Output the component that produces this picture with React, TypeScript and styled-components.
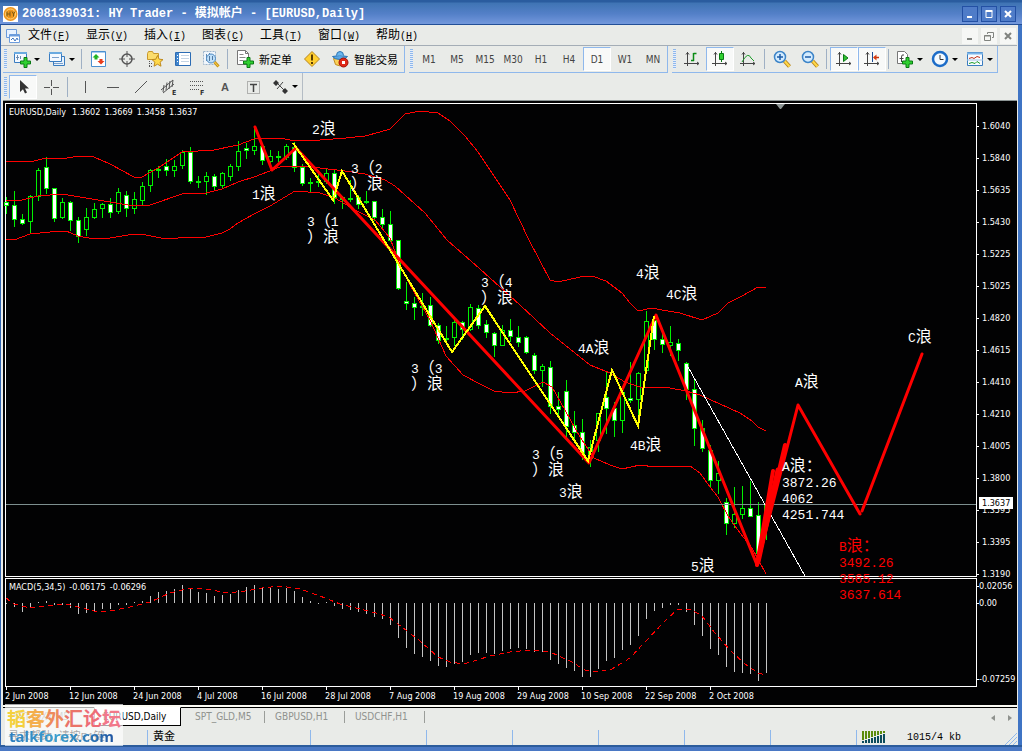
import React from "react";
import styled, { createGlobalStyle, css } from "styled-components";

const SANS = `"DejaVu Sans Condensed", "Noto Sans", "Noto Sans CJK SC", sans-serif`;
const MONO = `"Liberation Mono", "Noto Sans CJK SC", monospace`;
const FACE = "#e9ebe8";
const EDGE = "#8fb8ec";

const GlobalStyle = createGlobalStyle`
  *, *::before, *::after { box-sizing: border-box; }
  body { margin: 0; background: #3f6db4; }
  button { font: inherit; color: inherit; background: none; border: 0; padding: 0; margin: 0; }
  ul { list-style: none; margin: 0; padding: 0; }
`;

/* ---------- window frame ---------- */

const Window = styled.div`
  display: flex;
  flex-direction: column;
  min-height: 100vh;
  font-family: ${SANS};
  font-size: 10px;
  color: #111;
`;

const TitleBar = styled.header`
  display: flex;
  align-items: center;
  height: 25px;
  padding: 3px 6px 0 3px;
  border-bottom: 1px solid #234f97;
  background: linear-gradient(#2a5c9f 0, #2a5c9f 2px, #3f74b4 3px, #5480c8 14px, #7398dc 24px);
`;

const Title = styled.h1`
  flex: 1;
  margin: 0 0 0 4px;
  font: bold 12px/16px ${MONO};
  color: #fff;
  white-space: pre;
`;

const CaptionButtons = styled.div`
  display: flex;
  gap: 3px;
`;

const CaptionButton = styled.button<{ $flat?: boolean }>`
  display: grid;
  place-items: center;
  width: 16px;
  height: 16px;
  border: 1px solid ${(p) => (p.$flat ? "#f6f7f5" : "#2350a4")};
  background: ${(p) => (p.$flat ? "#f6f7f5" : "#4f7cc8")};
  color: ${(p) => (p.$flat ? "#80837f" : "#fff")};
`;

const Body = styled.div`
  display: flex;
  flex-direction: column;
  flex: 1;
  padding-right: 1px;
  border-left: 1px solid #2f64b0;
  border-right: 4px solid #3f74c4;
  background: ${FACE};
`;

const MenuBar = styled.nav`
  display: flex;
  align-items: center;
  height: 21px;
  padding: 2px 1px 0 5px;
  border-bottom: 1px solid #a4adb6;
`;

const MenuItems = styled.div`
  display: flex;
  flex: 1;
  margin-left: 7px;
`;

const MenuButton = styled.button`
  width: 58px;
  text-align: left;
  font: 12px/18px ${MONO};
  white-space: nowrap;
  color: #000;
`;

const Hotkey = styled.span`
  font-size: 10px;
`;

/* ---------- toolbars ---------- */

const ToolRow = styled.div`
  display: flex;
  gap: 4px;
  height: 27px;
  padding-left: 2px;
`;

const ToolGroup = styled.div<{ $plain?: boolean }>`
  display: flex;
  align-items: center;
  border-right: 1px solid ${(p) => (p.$plain ? "#b4bcc4" : EDGE)};
  border-bottom: ${(p) => (p.$plain ? "0" : `1px solid ${EDGE}`)};
`;

const Grip = styled.span`
  width: 3px;
  height: 20px;
  margin: 0 2px 0 1px;
  background: repeating-linear-gradient(#8fb8ec 0 1px, #e6eefa 1px 2px);
`;

const Divider = styled.span`
  width: 1px;
  height: 20px;
  margin: 0 3px 0 2px;
  background: #9fb0c4;
`;

const ToolButton = styled.button<{ $wide?: boolean; $active?: boolean; $text?: boolean }>`
  display: flex;
  align-items: center;
  justify-content: center;
  gap: 3px;
  width: ${(p) => (p.$wide ? "35px" : "28px")};
  padding: 0 1px;
  height: 24px;
  font-size: 10px;
  color: #444;
  ${(p) =>
    p.$text &&
    css`
      width: auto;
      gap: 5px;
      padding: 0 6px 0 5px;
      font-size: 11px;
      color: #000;
    `}
  ${(p) =>
    p.$active &&
    css`
      border: 1px solid #fff;
      border-top-color: ${EDGE};
      border-left-color: ${EDGE};
      background: #f8f9f8;
    `}
`;

const Caret = styled.span`
  border: 3px solid transparent;
  border-top: 3px solid #000;
  border-bottom: 0;
`;

const Ico = ({ children, w = 18 }: { children: React.ReactNode; w?: number }) => (
  <svg width={w} height={18} viewBox={`0 0 ${w} 18`} fill="none" aria-hidden="true">
    {children}
  </svg>
);

const Plus = ({ x, y }: { x: number; y: number }) => (
  <path
    transform={`translate(${x} ${y})`}
    d="M4 .5h3V4h3.500v3H7v3.500H4V7H.5V4H4z"
    fill="#2fd02f"
    stroke="#0a7a14"
  />
);

const NewChart = () => (
  <Ico>
    <path d="M1.500 2.500h12v10h-12z" fill="#f4f9ff" stroke="#3a7cc0" />
    <path d="M1 3h13" stroke="#6aaae0" strokeWidth="2" />
    <path d="M4.500 5v5M3 7.500h3M7.500 6v3" stroke="#6c8cb0" />
    <Plus x={7} y={7} />
  </Ico>
);
const Profiles = () => (
  <Ico>
    <path d="M5.500 6.500h11v9h-11z" fill="#e8f2fc" stroke="#3a7cc0" />
    <path d="M1.500 2.500h12v9h-12z" fill="#f4f9ff" stroke="#3a7cc0" />
    <path d="M1 3h13" stroke="#6aaae0" strokeWidth="2" />
    <path d="M4 7.500h7M6 13.500h9" stroke="#7ba0cc" />
  </Ico>
);
const MarketWatch = () => (
  <Ico>
    <path d="M1.500 1.500h14v15h-14z" fill="#fff" stroke="#4a90d0" />
    <path d="M2 2.500h13" stroke="#a8cdf0" />
    <path d="M6 4l3.500 3.500H7.500v2h-3v-2H2.500z" fill="#22b422" />
    <path d="M11 14.500L7.500 11h2V9h3v2h2z" fill="#e83c1c" />
  </Ico>
);
const Target = () => (
  <Ico>
    <circle cx="9" cy="9" r="5" stroke="#555" strokeWidth="1.500" />
    <path d="M9 1v6M9 11v6M1 9h6M11 9h6" stroke="#555" />
  </Ico>
);
const Navigator = () => (
  <Ico>
    <path d="M1.500 3.500l1-2h4l1 2h5v6h-11z" fill="#fbdc6c" stroke="#c8982c" />
    <path d="M3.500 11v5M3 13.500h4M3 16.500h3" stroke="#555" strokeDasharray="1 1" />
    <path d="M11.500 5.500l1.700 3.700 3.800.4-2.900 2.600.9 4-3.500-2-3.500 2 .9-4L6 9.600l3.800-.4z" fill="#ffd94a" stroke="#c08a1c" />
  </Ico>
);
const DataWindow = () => (
  <Ico>
    <path d="M1.500 2.500h15v13h-15z" fill="#fff" stroke="#2c6cb4" />
    <path d="M2 3h3v12H2z" fill="#3f84cc" />
    <path d="M3 5h1v1H3zM3 8h1v1H3zM3 11h1v1H3z" fill="#fff" />
    <path d="M7 5.500h8M7 8.500h8M7 11.500h8" stroke="#c4d4e4" />
  </Ico>
);
const Tester = () => (
  <Ico>
    <path d="M1.500 1.500h12v13h-12z" fill="#f0f6fc" stroke="#9cb4cc" strokeDasharray="2 1" />
    <path d="M4.500 4v7M7.500 3v6" stroke="#6088b0" />
    <circle cx="9" cy="8.500" r="4.500" fill="#bfe0fa" stroke="#4c88c0" />
    <path d="M7.500 6v5M10.500 6v4" stroke="#5078a0" />
    <path d="M12.500 12l4 4.500" stroke="#c8941c" strokeWidth="3" />
    <path d="M12.500 12l4 4.500" stroke="#ffd648" />
  </Ico>
);
const NewOrder = () => (
  <Ico>
    <path d="M1.500.5h8l3 3v11h-11z" fill="#fff" stroke="#777" />
    <path d="M9.500.5v3h3" stroke="#777" />
    <path d="M3.500 4.500h4M3.500 7.500h6M3.500 10.500h4" stroke="#888" />
    <Plus x={7} y={7} />
  </Ico>
);
const Warning = () => (
  <Ico>
    <path d="M9 1.500L16.500 9 9 16.500 1.500 9z" fill="#ffcf30" stroke="#b8861c" />
    <path d="M9 4.500v6" stroke="#5a3c00" strokeWidth="2" />
    <path d="M9 12v2" stroke="#5a3c00" strokeWidth="2" />
  </Ico>
);
const Expert = () => (
  <Ico>
    <path d="M2.500 8.500h12l-2 6q-4 2.500-8 0z" fill="#fbd258" stroke="#c08c20" />
    <path d="M1.500 6.500q7-2 15 0-2 3-7.500 3t-7.500-3z" fill="#5aa8e4" stroke="#2c74b4" />
    <path d="M5.500 5.500q0-4 3.500-4t3.500 4" fill="#6cb8f0" stroke="#2c74b4" />
    <circle cx="12.500" cy="12.500" r="4.500" fill="#e02818" stroke="#a01008" />
    <path d="M11 11h3v3h-3z" fill="#fff" />
  </Ico>
);
const axes = "M4.500 2v14M1 13.500h15M3 4.500l1.500-2 1.500 2M14 12l2 1.500-2 1.500";
const BarChart = () => (
  <Ico>
    <path d={axes} stroke="#444" />
    <path d="M10.500 3v8M10.500 3.500h3M8 10.500h3" stroke="#0a8c14" strokeWidth="1.500" />
  </Ico>
);
const CandleChart = () => (
  <Ico>
    <path d={axes} stroke="#444" />
    <path d="M10.500 1v11" stroke="#0a7a14" />
    <path d="M8.500 3.500h4v6h-4z" fill="#2fd02f" stroke="#0a7a14" />
  </Ico>
);
const LineChart = () => (
  <Ico>
    <path d={axes} stroke="#444" />
    <path d="M3 12q6-11 9-4l3 3" stroke="#1c9c28" />
  </Ico>
);
const Zoom = ({ plus }: { plus?: boolean }) => (
  <Ico>
    <path d="M11.500 11l5 5.500" stroke="#b8861c" strokeWidth="4" />
    <path d="M11.500 11l5 5.500" stroke="#ffd848" strokeWidth="2" />
    <circle cx="7" cy="7" r="5.500" fill="#d4ecff" stroke="#3c84c8" strokeWidth="1.500" />
    <path d={plus ? "M4 7h6M7 4v6" : "M4 7h6"} stroke="#1c5ca8" strokeWidth="1.500" />
  </Ico>
);
const AutoScroll = () => (
  <Ico>
    <path d={axes} stroke="#444" />
    <path d="M8.500 4.500v7l4.500-3.500z" fill="#2fc02f" stroke="#0a7a14" />
  </Ico>
);
const ChartShift = () => (
  <Ico>
    <path d={axes} stroke="#444" />
    <path d="M9.500 2v10" stroke="#1c4c94" />
    <path d="M16 7.500h-5" stroke="#c8340c" strokeWidth="1.500" />
    <path d="M10 7.500l3.500-3v6z" fill="#d83c10" />
  </Ico>
);
const Indicators = () => (
  <Ico>
    <path d="M1.500 1.500h7l3 3v9h-10z" fill="#fff" stroke="#777" />
    <path d="M8 5q-2.500-1-2.500 2v5M3.500 8.500h4" stroke="#444" />
    <Plus x={6} y={7} />
  </Ico>
);
const Clock = () => (
  <Ico>
    <circle cx="9" cy="9" r="7" fill="#f4faff" stroke="#1c6cc8" strokeWidth="2.500" />
    <path d="M9 5v4.500h3.500" stroke="#333" />
  </Ico>
);
const Template = () => (
  <Ico>
    <path d="M1.500 2.500h15v13h-15z" fill="#f8fbff" stroke="#3a7cc0" />
    <path d="M1 3.500h16" stroke="#7ab4e8" strokeWidth="2" />
    <path d="M3 8.500l3-1 2 1 3-2 3 1" stroke="#c03018" />
    <path d="M1 10h16" stroke="#a4c4e4" />
    <path d="M3 13.500l3-1 3 1 2-2 3 2" stroke="#1c9c28" />
  </Ico>
);
const Pointer = () => (
  <Ico>
    <path d="M6 2v12l3-2.800 2 4.300 2-1-2-4h4z" fill="#333" />
  </Ico>
);
const stroke = (d: string, extra?: React.ReactNode) => () => (
  <Ico>
    <path d={d} stroke="#555" />
    {extra}
  </Ico>
);
const Cross = stroke("M9.500 2v6M9.500 11v6M2 9.500h6M11 9.500h6");
const VLine = stroke("M9.500 3v12");
const HLine = stroke("M3 9.500h12");
const Trend = stroke("M3 15L15 3");
const IconLetter = styled.text`
  font: bold 7px ${SANS};
  fill: #333;
`;
const Channel = stroke(
  "M1 12L13 2M3 15L14 6M4 7l-1 7M7 4.500L6 12M10 3L9 11M13 2l-1 7",
  <IconLetter x="12" y="17">E</IconLetter>
);
const Fibo = () => (
  <Ico>
    <path d="M2 3.500h14M2 7.500h14M2 11.500h10" stroke="#555" strokeDasharray="1 1" />
    <IconLetter x="12" y="17">F</IconLetter>
  </Ico>
);
const BoxT = () => (
  <Ico>
    <path d="M3.500 3.500h12v12h-12z" stroke="#777" strokeDasharray="1 1" />
    <path d="M6 6.500h7M9.500 6v8" stroke="#444" strokeWidth="1.500" />
  </Ico>
);
const Arrows = () => (
  <Ico>
    <path d="M5 2l3 3-3 3-3-3zM14 10l3 3-3 3-3-3z" fill="#333" />
    <path d="M7 6l6 6M12 4l-6 7" stroke="#444" />
  </Ico>
);
const AppLogo = () => (
  <svg width="15" height="16" viewBox="0 0 15 16" aria-hidden="true">
    <path d="M0 0h15v16H0z" fill="#fff" />
    <circle cx="7.500" cy="8" r="7" fill="#f0961c" />
    <circle cx="7.500" cy="8" r="5" fill="none" stroke="#ffd27a" />
    <path d="M4 5.500v5M4 8h3M7 5.500v5M9 5.500l1.500 2.500L12 5.500M10.500 8v2.500" stroke="#7a5a14" fill="none" />
  </svg>
);
const DocLogo = () => (
  <svg width="15" height="15" viewBox="0 0 15 15" fill="none" aria-hidden="true">
    <path d="M.5.5h10v8H.5z" fill="#e8f2ff" stroke="#6c9cdc" />
    <path d="M3.500 5.500h10v8h-10z" fill="#fff" stroke="#6c9cdc" />
    <path d="M4 6.500h9" stroke="#6c9cdc" strokeWidth="2" />
    <path d="M5 11l2-2 2 3 2-3 1 2" stroke="#3c74c0" />
  </svg>
);
const Minimize = () => (
  <svg width="10" height="10" aria-hidden="true">
    <path d="M2 7h5v2H2z" fill="currentColor" />
  </svg>
);
const Maximize = () => (
  <svg width="10" height="10" fill="none" aria-hidden="true">
    <path d="M2 2.500h6v6H2z" stroke="currentColor" />
    <path d="M1.500 2h7" stroke="currentColor" strokeWidth="2" />
  </svg>
);
const Restore = () => (
  <svg width="10" height="10" fill="none" aria-hidden="true">
    <path d="M3.500 3V1.500h6v5H8M.5 4.500h6v5h-6zM.5 5h6" stroke="currentColor" />
  </svg>
);
const CloseX = () => (
  <svg width="10" height="10" fill="none" aria-hidden="true">
    <path d="M2 2l6 6M8 2L2 8" stroke="currentColor" strokeWidth="2" />
  </svg>
);

/* ---------- chart ---------- */

const ChartArea = styled.main`
  display: grid;
  grid-template-columns: minmax(0, 1fr) 40px;
  grid-template-rows: 474px 109px 17px;
  row-gap: 1px;
  margin-left: 2px;
  padding: 2px 0 0 2px;
  border-top: 1px solid #8c9494;
  background: #020203;
  color: #fff;
  font-size: 9px;
`;

const Pane = styled.section<{ $front?: boolean }>`
  position: relative;
  z-index: ${(p) => (p.$front ? 1 : 0)};
  border: 1px solid #fff;
`;

const Caption = styled.p`
  position: absolute;
  left: 3px;
  top: 2px;
  display: flex;
  gap: 4px;
  margin: 0;
  line-height: 13px;
  white-space: nowrap;
`;

const Symbol = styled.span`
  margin-right: 2px;
`;

const Drawing = styled.svg`
  display: block;
  width: 100%;
  height: 100%;
  overflow: visible;
`;

const PriceAxis = styled.ul`
  position: relative;
  height: 474px;
  padding-top: 7px;
`;

const PriceTick = styled.li`
  display: flex;
  align-items: center;
  gap: 3px;
  height: 32px;
  &::before {
    content: "";
    width: 2px;
    height: 1px;
    background: #fff;
  }
`;

const PriceTag = styled.strong`
  position: absolute;
  left: 2px;
  top: 394px;
  width: 34px;
  padding-left: 3px;
  background: #fff;
  color: #000;
  font-weight: normal;
  line-height: 12px;
`;

const MacdAxis = styled.ul`
  display: flex;
  flex-direction: column;
  height: 109px;
`;

const MacdTick = styled.li`
  display: flex;
  align-items: center;
  height: 16px;
  &::before {
    content: "";
    width: 2px;
    height: 1px;
    background: #fff;
  }
  &:nth-child(2) {
    margin-top: 1px;
  }
  &:last-child {
    margin-top: auto;
  }
`;

const TimeAxis = styled.ul`
  display: flex;
  grid-column: 1 / -1;
  margin-top: -1px;
`;

const TimeTick = styled.li`
  width: 64px;
  flex: none;
  line-height: 12px;
  white-space: nowrap;
  &::before {
    content: "";
    display: block;
    width: 1px;
    height: 3px;
    margin-left: 1px;
    background: #fff;
  }
`;

const NoteText = styled.text`
  font: 13px ${MONO};
`;

const x = (i: number) => 6 + i * 8;

/* high, body top, body bottom, low, falling */
const candles: [number, number, number, number, number][] = [
  [197, 202, 205, 214, 1], [191, 205, 219, 227, 1], [214, 219, 223, 225, 1], [195, 196, 221, 233, 0],
  [168, 170, 196, 201, 0], [157, 167, 188, 194, 1], [188, 188, 218, 222, 1], [198, 202, 217, 219, 0],
  [201, 202, 220, 231, 1], [217, 220, 236, 243, 1], [208, 217, 229, 236, 0], [203, 209, 217, 219, 0],
  [203, 204, 208, 218, 0], [198, 204, 212, 218, 1], [188, 192, 211, 214, 0], [191, 195, 208, 217, 1],
  [192, 199, 208, 214, 0], [182, 186, 200, 206, 0], [169, 170, 185, 192, 0], [166, 169, 170, 178, 1],
  [159, 166, 170, 176, 1], [160, 166, 170, 177, 0], [150, 152, 165, 169, 0], [147, 152, 181, 184, 1],
  [176, 181, 182, 188, 1], [172, 176, 181, 195, 0], [174, 176, 186, 190, 1], [172, 173, 185, 189, 0],
  [164, 166, 176, 181, 0], [141, 151, 166, 171, 0], [143, 148, 150, 159, 1], [128, 146, 150, 155, 0],
  [143, 146, 160, 165, 1], [150, 156, 161, 168, 0], [151, 156, 157, 162, 1], [144, 146, 157, 160, 0],
  [142, 147, 167, 172, 1], [164, 167, 183, 186, 1], [178, 182, 183, 192, 1], [170, 181, 182, 187, 1],
  [169, 173, 181, 184, 0], [170, 173, 197, 204, 1], [196, 197, 199, 209, 1], [180, 198, 199, 202, 1],
  [195, 197, 204, 209, 1], [191, 201, 202, 204, 1], [201, 201, 217, 221, 1], [209, 217, 224, 228, 1],
  [211, 224, 240, 242, 1], [240, 240, 288, 290, 1], [282, 301, 303, 310, 1], [297, 303, 307, 320, 1],
  [293, 306, 307, 316, 1], [297, 305, 325, 327, 1], [323, 325, 340, 344, 1], [326, 338, 339, 345, 1],
  [320, 322, 337, 346, 0], [321, 322, 329, 340, 1], [304, 307, 329, 331, 0], [305, 308, 325, 329, 1],
  [320, 324, 332, 338, 1], [332, 333, 345, 357, 1], [325, 330, 345, 346, 0], [319, 330, 336, 342, 1],
  [326, 337, 342, 347, 1], [336, 337, 352, 354, 1], [353, 355, 370, 374, 1], [364, 366, 370, 387, 0],
  [361, 367, 406, 414, 1], [392, 406, 409, 415, 1], [380, 391, 426, 438, 1], [411, 425, 432, 440, 1],
  [419, 432, 453, 460, 1], [440, 447, 458, 467, 0], [413, 413, 440, 452, 0], [371, 397, 408, 434, 1],
  [402, 408, 420, 437, 1], [387, 392, 420, 433, 0], [362, 398, 400, 403, 1], [372, 373, 399, 417, 0],
  [311, 321, 370, 371, 0], [316, 320, 339, 350, 1], [332, 339, 344, 353, 1], [326, 342, 345, 356, 0],
  [339, 343, 350, 361, 1], [362, 363, 389, 400, 1], [380, 389, 428, 446, 1], [420, 428, 448, 452, 1],
  [445, 450, 480, 487, 1], [461, 473, 480, 494, 0], [498, 502, 523, 535, 1], [487, 514, 523, 528, 0],
  [486, 508, 514, 519, 0], [481, 508, 516, 517, 1], [502, 515, 553, 562, 1], [500, 504, 515, 540, 0],
];

const bands = [
  "6,161 30,162 46,158 62,159 78,156 94,157 110,164 134,177 142,177 158,168 182,152 198,151 214,150 238,145 254,139 265,138 285,139 295,141 320,140 346,138 365,136 380,132 390,129 405,114 420,111 438,113 450,121 465,136 478,152 490,170 510,200 529,240 550,280 558,282 580,277 592,276 606,281 622,293 630,303 638,311 652,308 662,310 680,313 702,320 718,313 728,303 742,296 758,287 766,287",
  "6,200 22,200 38,196 62,194 86,198 110,202 134,206 150,205 182,194 206,193 222,189 238,182 254,177 262,174 280,167 300,166 320,168 345,171 365,174 385,180 395,186 425,213 447,240 480,269 520,305 550,333 590,365 610,373 625,382 640,387 670,388 686,391 700,395 720,404 740,413 752,421 758,427 766,431",
  "6,239 14,240 30,234 50,232 66,231 78,236 94,239 110,238 134,234 146,235 166,239 190,237 206,237 222,233 230,229 238,223 254,214 270,206 280,200 295,191 320,193 335,198 355,210 375,220 390,238 400,265 410,285 430,320 446,356 463,375 478,383 494,391 510,393 525,391 543,382 552,387 565,410 580,437 594,458 610,465 622,469 640,465 655,467 670,466 690,466 700,473 710,487 718,497 728,516 740,533 752,548 766,574",
];

const macdEnds = [
  604, 607, 612, 607, 602, 601, 605, 605, 608, 614, 613, 611, 609, 609, 605, 605, 602, 601, 596, 592, 591, 589, 585,
  589, 592, 593, 596, 595, 594, 590, 587, 585, 587, 587, 589, 588, 591, 597, 601, 604, 602, 606, 609, 610, 612, 614,
  617, 619, 625, 638, 648, 654, 657, 661, 666, 667, 664, 662, 655, 653, 653, 654, 651, 649, 648, 649, 652, 652, 660,
  664, 668, 671, 677, 677, 669, 661, 658, 650, 645, 636, 619, 611, 608, 605, 605, 612, 625, 636, 649, 655, 667, 672,
  673, 674, 681, 673,
];

const signal =
  "6,598 14,604 30,608 46,606 66,604 78,607 94,611 110,611 130,607 150,602 170,593 190,588 206,589 228,593 245,591 262,588 280,586 300,589 320,596 340,604 360,609 380,614 390,618 402,627 420,641 438,657 450,662 464,664 490,656 510,652 530,650 550,652 570,661 585,670 597,672 612,669 630,658 645,642 665,621 678,609 692,610 702,616 715,633 730,650 745,664 758,673 766,675";

const notes: { at: [number, number]; lines: string[]; color?: string }[] = [
  { at: [312, 121], lines: ["2浪"] },
  { at: [252, 186], lines: ["1浪"] },
  { at: [351, 160], lines: ["3（2", "）浪"] },
  { at: [307, 213], lines: ["3（1", "）浪"] },
  { at: [481, 274], lines: ["3（4", "）浪"] },
  { at: [411, 360], lines: ["3（3", "）浪"] },
  { at: [532, 446], lines: ["3（5", "）浪"] },
  { at: [559, 484], lines: ["3浪"] },
  { at: [636, 265], lines: ["4浪"] },
  { at: [666, 286], lines: ["4C浪"] },
  { at: [578, 340], lines: ["4A浪"] },
  { at: [630, 437], lines: ["4B浪"] },
  { at: [691, 558], lines: ["5浪"] },
  { at: [795, 374], lines: ["A浪"] },
  { at: [908, 329], lines: ["C浪"] },
  { at: [782, 458], lines: ["A浪：", "3872.26", "4062", "4251.744"] },
  { at: [839, 538], lines: ["B浪：", "3492.26", "3565.12", "3637.614"], color: "#f00" },
];

const NoteLine = ({ text }: { text: string }) => (
  <>
    {(text.match(/[\x20-\x7e]+|[^\x20-\x7e]+/g) ?? []).map((run, i) => (
      <tspan key={i} fontSize={run.charCodeAt(0) > 127 ? 16 : 13}>
        {run}
      </tspan>
    ))}
  </>
);

const PriceDrawing = () => (
  <Drawing role="img" aria-label="EURUSD Daily">
    <g transform="translate(-6 -104)">
      <path d="M776 104h9l-4 5h-1z" fill="#8c9494" />
      <g shapeRendering="crispEdges" stroke="#00f000">
        {candles.map(([h, t, b, l, down], i) => (
          <g key={i}>
            <path d={`M${x(i) + 0.5} ${h}V${t}M${x(i) + 0.5} ${b}V${l}`} />
            <rect x={x(i) - 1.5} y={t + 0.5} width={4} height={b - t} fill={down && b - t > 1 ? "#fff" : "#020203"} />
          </g>
        ))}
      </g>
      <g fill="none" stroke="#f00" shapeRendering="crispEdges">
        {bands.map((p) => (
          <polyline key={p} points={p} />
        ))}
      </g>
      <path d="M6 504.500H976" stroke="#7d8f8f" shapeRendering="crispEdges" />
      <path d="M688 367L805 576" stroke="#fff" shapeRendering="crispEdges" />
      <g fill="none" stroke="#f00" strokeWidth="3" strokeLinecap="round" strokeLinejoin="round">
        <path d="M255 127L272 170L296 148L589 463L656 315L757 565L798 405L860 514" />
        <path d="M862 511L922 354" />
        <path d="M757 565L773 471M757 565L785 445" strokeWidth="4" />
        <path d="M758 562L778 470" strokeWidth="5" />
      </g>
      <polyline
        points="293,143 333,200 342,171 452,352 485,306 588,461 612,370 638,426 654,316"
        fill="none"
        stroke="#ff0"
        strokeWidth="2"
        shapeRendering="crispEdges"
      />
      {notes.map(({ at, lines, color = "#fff" }) =>
        lines.map((line, i) => (
          <NoteText key={at.join() + i} x={at[0]} y={at[1] + 13 + i * 16} fill={color}>
            <NoteLine text={line} />
          </NoteText>
        ))
      )}
    </g>
  </Drawing>
);

const MacdDrawing = () => (
  <Drawing role="img" aria-label="MACD">
    <g transform="translate(-6 -579)" shapeRendering="crispEdges" fill="none">
      {macdEnds.map((end, i) => (
        <path key={i} d={`M${x(i) + 0.5} 603V${end}`} stroke="#c4c4c4" />
      ))}
      <polyline points={signal} stroke="#f00" strokeDasharray="5 4" />
    </g>
  </Drawing>
);

const prices = [
  "1.6040", "1.5840", "1.5635", "1.5430", "1.5225", "1.5025", "1.4820", "1.4615",
  "1.4410", "1.4210", "1.4005", "1.3800", "1.3595", "1.3395", "1.3190",
];
const dates = [
  "2 Jun 2008", "12 Jun 2008", "24 Jun 2008", "4 Jul 2008", "16 Jul 2008", "28 Jul 2008",
  "7 Aug 2008", "19 Aug 2008", "29 Aug 2008", "10 Sep 2008", "22 Sep 2008", "2 Oct 2008",
];

/* ---------- footer ---------- */

const Footer = styled.footer`
  position: relative;
  margin-left: 2px;
`;

const Tabs = styled.div`
  display: flex;
  align-items: flex-start;
  height: 24px;
  border-top: 2px solid #fbfbf4;
`;

const TabStrip = styled.div`
  display: flex;
  flex: 1;
  border-top: 1px solid #000;
`;

const Tab = styled.button<{ $active?: boolean; $first?: boolean }>`
  width: 80px;
  height: 18px;
  padding-left: 10px;
  text-align: left;
  line-height: 14px;
  color: #8f928e;
  background: linear-gradient(#9a9d99, #9a9d99) right 3px / 1px 12px no-repeat;
  ${(p) =>
    p.$first &&
    css`
      width: 91px;
      background: none;
    `}
  ${(p) =>
    p.$active &&
    css`
      width: 87px;
      height: 19px;
      margin: -1px 4px 0 0;
      padding-left: 8px;
      background: #fff;
      color: #000;
      border: 1px solid #000;
      border-top-color: #fff;
      border-left-color: #777;
    `}
`;

const TabArrows = styled.div`
  display: flex;
  gap: 13px;
  padding: 7px 5px 0 0;
  border-top: 1px solid #000;
  height: 18px;
`;

const Arrow = styled.button<{ $right?: boolean }>`
  width: 4px;
  height: 6px;
  background: #8f928e;
  clip-path: ${(p) => (p.$right ? "polygon(0 0, 100% 50%, 0 100%)" : "polygon(100% 0, 0 50%, 100% 100%)")};
`;

const StatusBar = styled.div`
  display: flex;
  align-items: center;
  height: 16px;
  font: 11px/15px ${MONO};
  color: #000;
`;

const StatusCell = styled.span<{ $w?: number }>`
  ${(p) => (p.$w ? `width: ${p.$w}px;` : "flex: 1;")}
  height: 15px;
  padding-left: 5px;
  white-space: nowrap;
  overflow: hidden;
  border-right: ${(p) => (p.$w ? `1px solid ${EDGE}` : "0")};
`;

const Traffic = styled(StatusCell)`
  display: flex;
  align-items: center;
  gap: 22px;
  font-size: 10px;
`;

const SizeGrip = styled.svg`
  align-self: flex-end;
`;

const Watermark = styled.aside`
  position: absolute;
  left: 2px;
  top: -1px;
  width: 118px;
  height: 42px;
  padding: 4px 2px 0;
  background: rgba(255, 255, 255, 0.65);
`;

const Brand = styled.div`
  font: bold 19px/20px "Noto Sans CJK SC", sans-serif;
  white-space: nowrap;
`;

const Glyph = styled.span<{ $c: string }>`
  color: ${(p) => p.$c};
`;

const Site = styled.div`
  font: bold 15px/16px "Open Sans", sans-serif;
  background: linear-gradient(90deg, #2a7cc0, #3aa0d0 45%, #1c4c9c);
  background-clip: text;
  -webkit-background-clip: text;
  color: transparent;
  padding-left: 2px;
`;

const TaskBar = styled.div`
  height: 7px;
  overflow: hidden;
  border-top: 2px solid #2c5c9c;
  background: #4a78c4;
`;

const brandColors: [string, string][] = [
  ["韬", "#f4d03c"], ["客", "#f4ae4c"], ["外", "#ee8a5c"], ["汇", "#ea7468"], ["论", "#ee6c78"], ["坛", "#f2788a"],
];

const taskIcons: [number, number, string][] = [
  [14, 12, "#454c60"], [53, 5, "#e0a030"], [79, 6, "#fff"], [102, 7, "#6cc0f0"], [154, 8, "#fff"], [224, 16, "#fff"],
  [302, 9, "#fff"], [373, 15, "#cfe8b8"], [450, 8, "#fff"], [525, 8, "#fff"], [599, 8, "#fff"], [673, 10, "#dce8ff"],
  [745, 10, "#ffe680"], [824, 8, "#f0a838"], [926, 10, "#dfe8f4"], [948, 9, "#bfe8fa"], [966, 8, "#a8b4c8"],
];

const menus: [string, string][] = [
  ["文件", "F"], ["显示", "V"], ["插入", "I"], ["图表", "C"], ["工具", "T"], ["窗口", "W"], ["帮助", "H"],
];

const B = ({
  label,
  icon: Icon,
  ...rest
}: {
  label: string;
  icon: React.ComponentType;
  $wide?: boolean;
  $active?: boolean;
}) => (
  <ToolButton aria-label={label} {...rest}>
    <Icon />
    {rest.$wide && <Caret />}
  </ToolButton>
);

const LetterA = styled.span`
  font: bold 11px/18px "Liberation Sans", sans-serif;
  color: #555;
`;

export default function App() {
  return (
    <Window>
      <GlobalStyle />
      <TitleBar>
        <AppLogo />
        <Title>2008139031: HY Trader - 模拟帐户 - [EURUSD,Daily]</Title>
        <CaptionButtons>
          <CaptionButton aria-label="Minimize"><Minimize /></CaptionButton>
          <CaptionButton aria-label="Maximize"><Maximize /></CaptionButton>
          <CaptionButton aria-label="Close"><CloseX /></CaptionButton>
        </CaptionButtons>
      </TitleBar>
      <Body>
        <MenuBar>
          <DocLogo />
          <MenuItems>
            {menus.map(([name, key]) => (
              <MenuButton key={key}>
                {name}
                <Hotkey>(<u>{key}</u>)</Hotkey>
              </MenuButton>
            ))}
          </MenuItems>
          <CaptionButtons>
            <CaptionButton $flat aria-label="Minimize chart"><Minimize /></CaptionButton>
            <CaptionButton $flat aria-label="Restore chart"><Restore /></CaptionButton>
            <CaptionButton $flat aria-label="Close chart"><CloseX /></CaptionButton>
          </CaptionButtons>
        </MenuBar>

        <ToolRow>
          <ToolGroup>
            <Grip />
            <B label="New chart" icon={NewChart} $wide />
            <B label="Profiles" icon={Profiles} $wide />
            <Divider />
            <B label="Market watch" icon={MarketWatch} />
            <B label="Crosshair window" icon={Target} />
            <B label="Navigator" icon={Navigator} />
            <B label="Data window" icon={DataWindow} />
            <B label="Tester" icon={Tester} />
            <Divider />
            <ToolButton $text><NewOrder />新定单</ToolButton>
            <B label="Warnings" icon={Warning} />
            <ToolButton $text><Expert />智能交易</ToolButton>
          </ToolGroup>
          <ToolGroup>
            <Grip />
            {["M1", "M5", "M15", "M30", "H1", "H4", "D1", "W1", "MN"].map((p) => (
              <ToolButton key={p} $active={p === "D1"}>{p}</ToolButton>
            ))}
          </ToolGroup>
          <ToolGroup>
            <Grip />
            <B label="Bar chart" icon={BarChart} />
            <B label="Candlesticks" icon={CandleChart} $active />
            <B label="Line chart" icon={LineChart} />
            <Divider />
            <B label="Zoom in" icon={() => <Zoom plus />} />
            <B label="Zoom out" icon={() => <Zoom />} />
            <Divider />
            <B label="Auto scroll" icon={AutoScroll} $active />
            <B label="Chart shift" icon={ChartShift} $active />
            <Divider />
            <B label="Indicators" icon={Indicators} $wide />
            <B label="Periods" icon={Clock} $wide />
            <B label="Templates" icon={Template} $wide />
          </ToolGroup>
        </ToolRow>
        <ToolRow>
          <ToolGroup $plain>
            <Grip />
            <B label="Cursor" icon={Pointer} $active />
            <B label="Crosshair" icon={Cross} />
            <Divider />
            <B label="Vertical line" icon={VLine} />
            <B label="Horizontal line" icon={HLine} />
            <B label="Trend line" icon={Trend} />
            <B label="Channel" icon={Channel} />
            <B label="Fibonacci" icon={Fibo} />
            <B label="Text" icon={() => <LetterA>A</LetterA>} />
            <B label="Text label" icon={BoxT} />
            <B label="Arrows" icon={Arrows} $wide />
          </ToolGroup>
        </ToolRow>

        <ChartArea>
          <Pane $front>
            <PriceDrawing />
            <Caption>
              <Symbol>EURUSD,Daily</Symbol>
              <span>1.3602</span>
              <span>1.3669</span>
              <span>1.3458</span>
              <span>1.3637</span>
            </Caption>
          </Pane>
          <PriceAxis>
            {prices.map((p) => (
              <PriceTick key={p}>{p}</PriceTick>
            ))}
            <PriceTag>1.3637</PriceTag>
          </PriceAxis>
          <Pane>
            <MacdDrawing />
            <Caption>
              <span>MACD(5,34,5)</span>
              <span>-0.06175</span>
              <span>-0.06296</span>
            </Caption>
          </Pane>
          <MacdAxis>
            <MacdTick>0.02056</MacdTick>
            <MacdTick>0.00</MacdTick>
            <MacdTick>-0.07259</MacdTick>
          </MacdAxis>
          <TimeAxis>
            {dates.map((d) => (
              <TimeTick key={d}>{d}</TimeTick>
            ))}
          </TimeAxis>
        </ChartArea>

        <Footer>
          <Tabs>
            <TabStrip>
              <Tab $first>SPT_DXY,M5</Tab>
              <Tab $active>EURUSD,Daily</Tab>
              <Tab>SPT_GLD,M5</Tab>
              <Tab>GBPUSD,H1</Tab>
              <Tab>USDCHF,H1</Tab>
            </TabStrip>
            <TabArrows>
              <Arrow aria-label="Previous tabs" />
              <Arrow $right aria-label="Next tabs" />
            </TabArrows>
          </Tabs>
          <StatusBar>
            <StatusCell $w={145}>寻求帮助,请按F1键</StatusCell>
            <StatusCell $w={163}>黄金</StatusCell>
            <StatusCell $w={116} />
            <StatusCell $w={86} />
            <StatusCell $w={86} />
            <StatusCell $w={86} />
            <StatusCell $w={86} />
            <StatusCell $w={86} />
            <Traffic>
              <svg width="23" height="12" aria-hidden="true">
                {[0, 3, 6, 9, 12, 15, 18, 21].map((b) => (
                  <g key={b}>
                    <path d={`M${b + 1} 0V${9 - b / 3}`} stroke="#5c8c0c" strokeWidth="2" />
                    <path d={`M${b + 1} ${10 - b / 3}V12`} stroke="#0c4c5c" strokeWidth="2" />
                  </g>
                ))}
              </svg>
              1015/4 kb
            </Traffic>
            <SizeGrip width="12" height="12" fill="none" stroke={EDGE} aria-hidden="true">
              <path d="M0 12L12 0M4 12l8-8M8 12l4-4" />
            </SizeGrip>
          </StatusBar>
          <Watermark>
            <Brand>
              {brandColors.map(([g, c]) => (
                <Glyph key={g} $c={c}>{g}</Glyph>
              ))}
            </Brand>
            <Site>talkforex.com</Site>
          </Watermark>
        </Footer>
      </Body>
      <TaskBar>
        <svg width="100%" height="5" aria-hidden="true">
          <path d="M363 0h73v5h-73z" fill="#4a4cb0" />
          {taskIcons.map(([left, w, c]) => (
            <rect key={left} x={left} y={1} width={w} height={4} rx={1} fill={c} />
          ))}
          <path d="M228 2h8M228 4h8" stroke="#c02020" />
        </svg>
      </TaskBar>
    </Window>
  );
}
